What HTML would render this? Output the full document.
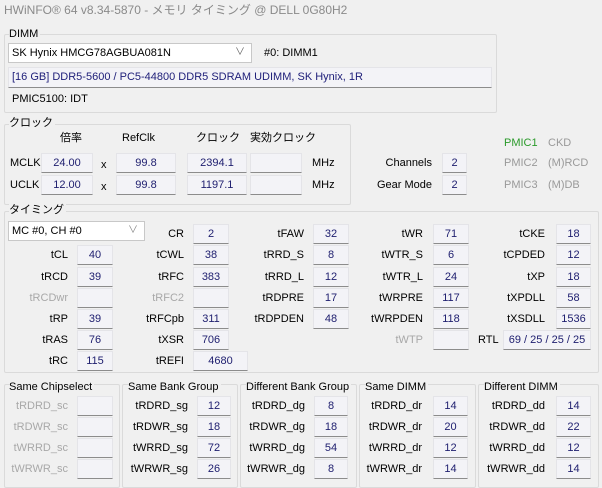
<!DOCTYPE html>
<html><head><meta charset="utf-8"><style>
*{margin:0;padding:0;box-sizing:border-box}
body{width:602px;height:483px;background:#f0f0f0;font-family:"Liberation Sans","Noto Sans CJK JP",sans-serif;font-size:11px;color:#000;position:relative;overflow:hidden}
.a{position:absolute;white-space:nowrap;line-height:20px}
.g{position:absolute;border:1px solid #dadada;border-radius:2px}
.gt{position:absolute;background:#f0f0f0;line-height:14px;padding-right:2px}
.b{position:absolute;height:20px;background:#f3f3f7;border:1px solid #e4e4e8;border-bottom:1px solid #8c8c8c;color:#202070;text-align:center;line-height:18px}
.r{position:absolute;line-height:20px;white-space:nowrap;text-align:right}
.d{color:#a8a8a8}
</style></head><body>
<div class="a" style="left:4px;top:0;color:#8a8a8a;font-size:12px">HWiNFO® 64 v8.34-5870 - メモリ タイミング @ DELL 0G80H2</div>

<div class="g" style="left:4px;top:34px;width:493px;height:79px"></div>
<div class="gt" style="left:9px;top:27px">DIMM</div>
<div class="a" style="left:8px;top:43px;width:244px;height:20px;background:#fff;border:1px solid #c8c8c8;line-height:18px;padding-left:3px">SK Hynix HMCG78AGBUA081N<span style="position:absolute;right:6px;top:0;color:#666;font-size:10px">&#8744;</span></div>
<div class="a" style="left:264px;top:43px">#0: DIMM1</div>
<div class="a" style="left:8px;top:67px;width:484px;height:21px;background:#f3f3f7;border:1px solid #e4e4e8;border-bottom:1px solid #8c8c8c;line-height:18px;padding-left:3px;color:#20207a">[16 GB] DDR5-5600 / PC5-44800 DDR5 SDRAM UDIMM, SK Hynix, 1R</div>
<div class="a" style="left:12px;top:89px">PMIC5100: IDT</div>

<div class="g" style="left:4px;top:124px;width:347px;height:81px"></div>
<div class="gt" style="left:9px;top:116px">クロック</div>
<div class="a" style="left:60px;top:128px">倍率</div>
<div class="a" style="left:122px;top:128px">RefClk</div>
<div class="a" style="left:196px;top:128px">クロック</div>
<div class="a" style="left:250px;top:128px">実効クロック</div>
<div class="a" style="left:10px;top:153px">MCLK</div>
<div class="b" style="left:41px;top:153px;width:52px">24.00</div>
<div class="a" style="left:101px;top:155px">x</div>
<div class="b" style="left:116px;top:153px;width:60px">99.8</div>
<div class="a" style="left:189px;top:155px">=</div>
<div class="b" style="left:187px;top:153px;width:60px">2394.1</div>
<div class="b" style="left:250px;top:153px;width:52px"></div>
<div class="a" style="left:312px;top:153px">MHz</div>
<div class="a" style="left:10px;top:175px">UCLK</div>
<div class="b" style="left:41px;top:175px;width:52px">12.00</div>
<div class="a" style="left:101px;top:177px">x</div>
<div class="b" style="left:116px;top:175px;width:60px">99.8</div>
<div class="a" style="left:189px;top:177px">=</div>
<div class="b" style="left:187px;top:175px;width:60px">1197.1</div>
<div class="b" style="left:250px;top:175px;width:52px"></div>
<div class="a" style="left:312px;top:175px">MHz</div>
<div class="r" style="right:170px;top:153px">Channels</div>
<div class="b" style="left:442px;top:153px;width:25px">2</div>
<div class="r" style="right:170px;top:175px">Gear Mode</div>
<div class="b" style="left:442px;top:175px;width:25px">2</div>
<div class="a" style="left:504px;top:133px;color:#2a9a2a">PMIC1</div>
<div class="a" style="left:548px;top:133px;color:#999">CKD</div>
<div class="a" style="left:504px;top:153px;color:#999">PMIC2</div>
<div class="a" style="left:548px;top:153px;color:#999">(M)RCD</div>
<div class="a" style="left:504px;top:175px;color:#999">PMIC3</div>
<div class="a" style="left:548px;top:175px;color:#999">(M)DB</div>

<div class="g" style="left:4px;top:211px;width:595px;height:162px"></div>
<div class="gt" style="left:9px;top:203px">タイミング</div>
<div class="a" style="left:8px;top:221px;width:137px;height:20px;background:#fff;border:1px solid #c8c8c8;line-height:18px;padding-left:3px">MC #0, CH #0<span style="position:absolute;right:6px;top:0;color:#888;font-size:10px">&#8744;</span></div>

<div class="r" style="right:534px;top:245px">tCL</div><div class="b" style="left:77px;top:245px;width:36px">40</div>
<div class="r" style="right:534px;top:267px">tRCD</div><div class="b" style="left:77px;top:267px;width:36px">39</div>
<div class="r d" style="right:534px;top:288px">tRCDwr</div><div class="b" style="left:77px;top:288px;width:36px"></div>
<div class="r" style="right:534px;top:309px">tRP</div><div class="b" style="left:77px;top:309px;width:36px">39</div>
<div class="r" style="right:534px;top:330px">tRAS</div><div class="b" style="left:77px;top:330px;width:36px">76</div>
<div class="r" style="right:534px;top:351px">tRC</div><div class="b" style="left:77px;top:351px;width:36px">115</div>

<div class="r" style="right:418px;top:224px">CR</div><div class="b" style="left:193px;top:224px;width:36px">2</div>
<div class="r" style="right:418px;top:245px">tCWL</div><div class="b" style="left:193px;top:245px;width:36px">38</div>
<div class="r" style="right:418px;top:267px">tRFC</div><div class="b" style="left:193px;top:267px;width:36px">383</div>
<div class="r d" style="right:418px;top:288px">tRFC2</div><div class="b" style="left:193px;top:288px;width:36px"></div>
<div class="r" style="right:418px;top:309px">tRFCpb</div><div class="b" style="left:193px;top:309px;width:36px">311</div>
<div class="r" style="right:418px;top:330px">tXSR</div><div class="b" style="left:193px;top:330px;width:36px">706</div>
<div class="r" style="right:418px;top:351px">tREFI</div><div class="b" style="left:193px;top:351px;width:55px">4680</div>

<div class="r" style="right:298px;top:224px">tFAW</div><div class="b" style="left:313px;top:224px;width:36px">32</div>
<div class="r" style="right:298px;top:245px">tRRD_S</div><div class="b" style="left:313px;top:245px;width:36px">8</div>
<div class="r" style="right:298px;top:267px">tRRD_L</div><div class="b" style="left:313px;top:267px;width:36px">12</div>
<div class="r" style="right:298px;top:288px">tRDPRE</div><div class="b" style="left:313px;top:288px;width:36px">17</div>
<div class="r" style="right:298px;top:309px">tRDPDEN</div><div class="b" style="left:313px;top:309px;width:36px">48</div>

<div class="r" style="right:179px;top:224px">tWR</div><div class="b" style="left:433px;top:224px;width:36px">71</div>
<div class="r" style="right:179px;top:245px">tWTR_S</div><div class="b" style="left:433px;top:245px;width:36px">6</div>
<div class="r" style="right:179px;top:267px">tWTR_L</div><div class="b" style="left:433px;top:267px;width:36px">24</div>
<div class="r" style="right:179px;top:288px">tWRPRE</div><div class="b" style="left:433px;top:288px;width:36px">117</div>
<div class="r" style="right:179px;top:309px">tWRPDEN</div><div class="b" style="left:433px;top:309px;width:36px">118</div>
<div class="r d" style="right:179px;top:330px">tWTP</div><div class="b" style="left:433px;top:330px;width:36px"></div>

<div class="r" style="right:57px;top:224px">tCKE</div><div class="b" style="left:556px;top:224px;width:35px">18</div>
<div class="r" style="right:57px;top:245px">tCPDED</div><div class="b" style="left:556px;top:245px;width:35px">12</div>
<div class="r" style="right:57px;top:267px">tXP</div><div class="b" style="left:556px;top:267px;width:35px">18</div>
<div class="r" style="right:57px;top:288px">tXPDLL</div><div class="b" style="left:556px;top:288px;width:35px">58</div>
<div class="r" style="right:57px;top:309px">tXSDLL</div><div class="b" style="left:556px;top:309px;width:35px">1536</div>
<div class="a" style="left:478px;top:330px">RTL</div><div class="b" style="left:503px;top:330px;width:88px">69 / 25 / 25 / 25</div>

<div class="g" style="left:4px;top:384px;width:116px;height:104px"></div><div class="gt" style="left:9px;top:380px">Same Chipselect</div>
<div class="g" style="left:122px;top:384px;width:116px;height:104px"></div><div class="gt" style="left:128px;top:380px">Same Bank Group</div>
<div class="g" style="left:240px;top:384px;width:117px;height:104px"></div><div class="gt" style="left:246px;top:380px">Different Bank Group</div>
<div class="g" style="left:359px;top:384px;width:117px;height:104px"></div><div class="gt" style="left:365px;top:380px">Same DIMM</div>
<div class="g" style="left:478px;top:384px;width:121px;height:104px"></div><div class="gt" style="left:484px;top:380px">Different DIMM</div>

<div class="r d" style="right:534px;top:396px">tRDRD_sc</div><div class="b" style="left:77px;top:396px;width:36px"></div>
<div class="r d" style="right:534px;top:417px">tRDWR_sc</div><div class="b" style="left:77px;top:417px;width:36px"></div>
<div class="r d" style="right:534px;top:438px">tWRRD_sc</div><div class="b" style="left:77px;top:438px;width:36px"></div>
<div class="r d" style="right:534px;top:459px">tWRWR_sc</div><div class="b" style="left:77px;top:459px;width:36px"></div>

<div class="r" style="right:414px;top:396px">tRDRD_sg</div><div class="b" style="left:197px;top:396px;width:34px">12</div>
<div class="r" style="right:414px;top:417px">tRDWR_sg</div><div class="b" style="left:197px;top:417px;width:34px">18</div>
<div class="r" style="right:414px;top:438px">tWRRD_sg</div><div class="b" style="left:197px;top:438px;width:34px">72</div>
<div class="r" style="right:414px;top:459px">tWRWR_sg</div><div class="b" style="left:197px;top:459px;width:34px">26</div>

<div class="r" style="right:297px;top:396px">tRDRD_dg</div><div class="b" style="left:314px;top:396px;width:34px">8</div>
<div class="r" style="right:297px;top:417px">tRDWR_dg</div><div class="b" style="left:314px;top:417px;width:34px">18</div>
<div class="r" style="right:297px;top:438px">tWRRD_dg</div><div class="b" style="left:314px;top:438px;width:34px">54</div>
<div class="r" style="right:297px;top:459px">tWRWR_dg</div><div class="b" style="left:314px;top:459px;width:34px">8</div>

<div class="r" style="right:180px;top:396px">tRDRD_dr</div><div class="b" style="left:433px;top:396px;width:35px">14</div>
<div class="r" style="right:180px;top:417px">tRDWR_dr</div><div class="b" style="left:433px;top:417px;width:35px">20</div>
<div class="r" style="right:180px;top:438px">tWRRD_dr</div><div class="b" style="left:433px;top:438px;width:35px">12</div>
<div class="r" style="right:180px;top:459px">tWRWR_dr</div><div class="b" style="left:433px;top:459px;width:35px">14</div>

<div class="r" style="right:57px;top:396px">tRDRD_dd</div><div class="b" style="left:556px;top:396px;width:35px">14</div>
<div class="r" style="right:57px;top:417px">tRDWR_dd</div><div class="b" style="left:556px;top:417px;width:35px">22</div>
<div class="r" style="right:57px;top:438px">tWRRD_dd</div><div class="b" style="left:556px;top:438px;width:35px">12</div>
<div class="r" style="right:57px;top:459px">tWRWR_dd</div><div class="b" style="left:556px;top:459px;width:35px">14</div>
</body></html>
